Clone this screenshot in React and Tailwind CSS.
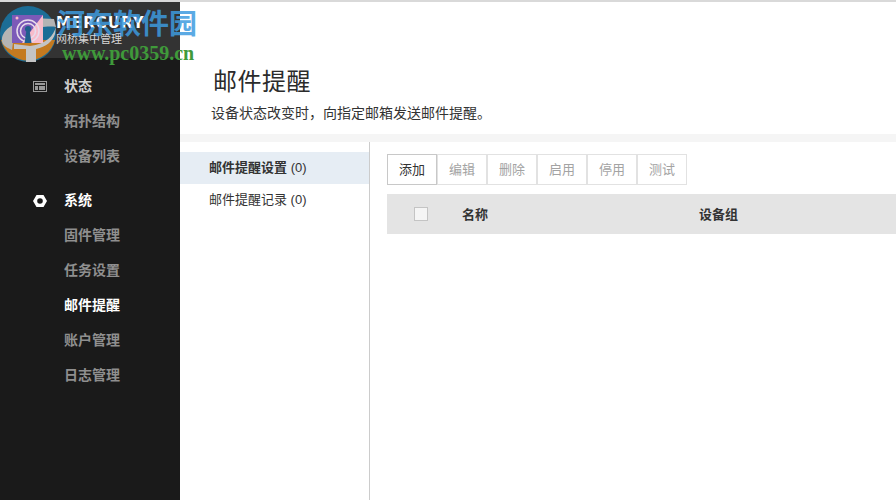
const cjk = { fontFamily: '"Liberation Sans", "Noto Sans CJK SC", sans-serif' };

const NavItem = ({ label, active }) => (
  <div className={`h-[35px] flex items-center pl-[64px] text-[14px] font-bold ${active ? 'text-white' : 'text-[#8f8f8f]'}`}>
    {label}
  </div>
);

const NavHead = ({ icon, label, className }) => (
  <div className={`h-[35px] flex items-center pl-[33px] gap-[17px] text-[14px] font-bold ${className}`}>
    <span className="w-[14px] flex justify-center">{icon}</span>
    {label}
  </div>
);

const ToolButton = ({ label, active }) => (
  <button className={`w-[50px] h-[31px] border text-[13px] ${active ? 'border-[#c8c8c8] text-[#333333]' : 'border-[#e2e2e2] text-[#a3a3a3]'}`}>
    {label}
  </button>
);

const App = () => (
  <div className="w-[896px] h-[500px] relative overflow-hidden bg-white flex flex-col" style={cjk}>
    <div className="h-[2px] bg-[#d9d9d9] shrink-0" />
    <div className="flex flex-1 min-h-0">
      <aside className="w-[180px] shrink-0 bg-[#1a1a1a] flex flex-col">
        <div className="h-[56px] bg-[#333333] pl-[56px] pt-[14px] text-white">
          <div className="text-[15px] font-bold leading-[14px] tracking-[1px]" style={{ fontFamily: '"DejaVu Sans", sans-serif' }}>MERCURY</div>
          <div className="text-[11px] leading-[14px] mt-[2px] text-[#d8d8d8]">网桥集中管理</div>
        </div>
        <div className="pt-[11px]">
          <NavHead
            className="text-[#cfcfcf]"
            label="状态"
            icon={
              <svg width="14" height="11" viewBox="0 0 14 11" fill="none">
                <rect x="0.5" y="0.5" width="13" height="10" stroke="#9a9a9a" />
                <rect x="2" y="2" width="10" height="2" fill="#9a9a9a" />
                <rect x="2" y="5" width="3" height="4" fill="#9a9a9a" />
                <rect x="6" y="5" width="6" height="4" fill="#9a9a9a" />
              </svg>
            }
          />
          <NavItem label="拓扑结构" />
          <NavItem label="设备列表" />
        </div>
        <div className="pt-[9px]">
          <NavHead
            className="text-white"
            label="系统"
            icon={
              <svg width="14" height="12" viewBox="0 0 14 12">
                <path fillRule="evenodd" fill="#ffffff" d="M3.5 0h7L14 6l-3.5 6h-7L0 6zM7 3.2a2.8 2.8 0 1 0 0 5.6a2.8 2.8 0 0 0 0-5.6z" />
              </svg>
            }
          />
          <NavItem label="固件管理" />
          <NavItem label="任务设置" />
          <NavItem label="邮件提醒" active />
          <NavItem label="账户管理" />
          <NavItem label="日志管理" />
        </div>
      </aside>
      <main className="flex-1 min-w-0 flex flex-col">
        <header className="h-[132px] shrink-0 pl-[32px] pt-[64px]">
          <h1 className="text-[24px] leading-[32px] pl-px tracking-[0.5px] text-[#2b2b2b]">邮件提醒</h1>
          <p className="text-[14px] leading-[20px] mt-[5px] -ml-px text-[#333333]">设备状态改变时，向指定邮箱发送邮件提醒。</p>
        </header>
        <div className="h-[8px] shrink-0 bg-[#f5f5f5]" />
        <div className="flex flex-1 min-h-0">
          <div className="w-[190px] shrink-0 border-r border-[#cccccc] pt-[10px] text-[13px] text-[#333333]">
            <div className="h-[32px] pl-[29px] flex items-center bg-[#e6edf4]"><span className="font-bold">邮件提醒设置</span>&nbsp;(0)</div>
            <div className="h-[32px] pl-[29px] flex items-center">邮件提醒记录&nbsp;(0)</div>
          </div>
          <div className="flex-1 min-w-0 pl-[17px] pt-[12px]">
            <div className="flex">
              <ToolButton label="添加" active />
              <ToolButton label="编辑" />
              <ToolButton label="删除" />
              <ToolButton label="启用" />
              <ToolButton label="停用" />
              <ToolButton label="测试" />
            </div>
            <div className="mt-[9px] h-[40px] bg-[#e4e4e4] flex items-center text-[13px] font-bold text-[#333333]">
              <span className="w-[14px] h-[14px] ml-[27px] bg-[#f5f5f5] border border-[#c4c4c4]" />
              <span className="w-[237px] ml-[34px] mt-[1px]">名称</span>
              <span className="mt-[1px]">设备组</span>
            </div>
          </div>
        </div>
      </main>
    </div>

    {/* watermark over the header */}
    <svg className="absolute left-0 top-0" width="58" height="64" viewBox="0 0 58 64">
      <circle cx="28" cy="34" r="28" fill="#1c6d96" />
      <path d="M1 40a28 28 0 0 0 54 0z" fill="#c47a20" />
      <path d="M2 38C4 26 24 16 54 19L56 27C44 25 20 30 13 42L12 50C5 47 1 44 2 38z" fill="#b4b4b4" />
      <path d="M56 26C54 36 46 44 30 46L14 44L14 49H26V62H36V49C46 47 53 41 55 34z" fill="#c4c4c4" />
      <rect x="12" y="15" width="31" height="28" fill="#7c5ab8" />
      <path d="M22 43L43 15v28z" fill="#f8bccb" />
      <circle cx="17" cy="18" r="1.5" fill="#f8bccb" />
      <circle cx="28" cy="31" r="11" fill="none" stroke="#e8dcec" strokeWidth="1.5" />
      <circle cx="28" cy="31" r="7.5" fill="none" stroke="#e8dcec" strokeWidth="1.5" />
      <circle cx="28" cy="29" r="3" fill="#1f5f8c" />
      <path d="M26.5 30h3l2 13h-7z" fill="#1f5f8c" />
    </svg>
    <div className="absolute left-[57px] top-[9px] text-[28px] leading-[32px] font-bold text-[#3d9be0]/85 whitespace-nowrap">河东软件园</div>
    <div className="absolute left-[62px] top-[42px] text-[20px] leading-[22px] font-bold text-[#3f9a3a] whitespace-nowrap" style={{ fontFamily: '"Liberation Serif", serif' }}>www.pc0359.cn</div>
  </div>
);

export default App;
